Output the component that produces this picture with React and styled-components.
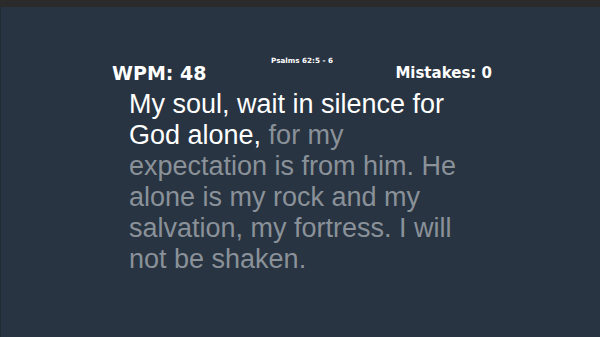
import React from 'react';
import styled, { createGlobalStyle } from 'styled-components';

const GlobalStyle = createGlobalStyle`
  html, body {
    margin: 0;
    padding: 0;
    background: #283440;
  }
`;

const Window = styled.div`
  width: 600px;
  height: 337px;
  display: flex;
  flex-direction: column;
  overflow: hidden;
`;

const TitleBar = styled.div`
  height: 7px;
  flex: none;
  background: #2b2b2b;
`;

const Stage = styled.main`
  flex: 1;
  background: #283441;
  border-left: 1px solid #222a33;
  display: flex;
  flex-direction: column;
  padding: 44px 0 0 111px;
`;

const Header = styled.div`
  width: 380px;
  display: grid;
  grid-template-columns: 1fr auto 1fr;
  align-items: start;
`;

const Stat = styled.div`
  font-family: "DejaVu Sans", sans-serif;
  font-weight: bold;
  color: #ffffff;
  font-size: ${({ size }) => size}px;
  margin-top: ${({ top }) => top}px;
  justify-self: ${({ align }) => align};
`;

const Reference = styled.div`
  font-family: "DejaVu Sans", sans-serif;
  font-weight: bold;
  font-size: 7.2px;
  color: #ffffff;
  margin-top: 5px;
`;

const Passage = styled.p`
  margin: 5px 0 0 17px;
  width: 345px;
  font-family: "Liberation Sans", Arial, sans-serif;
  font-size: 27px;
  line-height: 31px;
  color: #8a9199;
`;

const Typed = styled.span`
  color: #ffffff;
`;

export default function App() {
  return (
    <>
      <GlobalStyle />
      <Window>
        <TitleBar />
        <Stage>
          <Header>
            <Stat size={19} top={11} align="start">WPM: 48</Stat>
            <Reference>Psalms 62:5 - 6</Reference>
            <Stat size={15} top={13} align="end">Mistakes: 0</Stat>
          </Header>
          <Passage>
            <Typed>My soul, wait in silence for God alone,</Typed> for my expectation is from him. He alone is my rock and my salvation, my fortress. I will not be shaken.
          </Passage>
        </Stage>
      </Window>
    </>
  );
}
